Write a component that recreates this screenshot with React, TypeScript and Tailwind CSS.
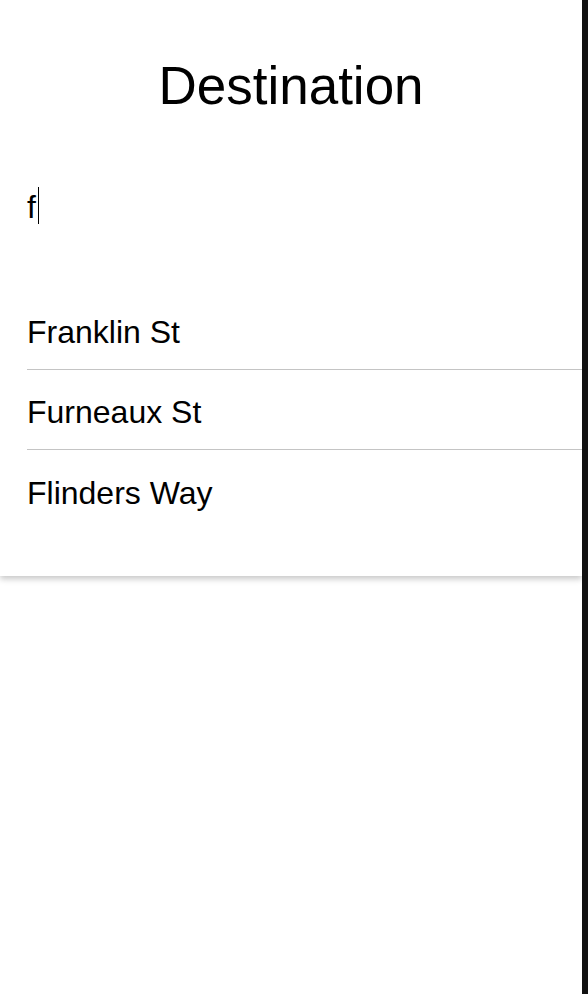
const SUGGESTIONS = ["Franklin St", "Furneaux St", "Flinders Way"];

export default function App() {
  return (
    <div className="flex h-[994px] w-full bg-white font-['Liberation_Sans',Arial,sans-serif] text-black">
      <main className="flex-1 min-w-0">
        {/* Search panel */}
        <section className="bg-white pb-[46px] shadow-[0_3px_6px_rgba(0,0,0,0.22)]">
          <h1 className="pt-[59px] text-center text-[53px] leading-none">Destination</h1>

          {/* Query */}
          <div className="mt-[77px] flex h-[37px] items-center pl-[27px] text-[32px] leading-[37px]">
            <span>f</span>
            <span className="ml-[2px] mt-[-4px] inline-block h-[37px] w-px bg-black" />
          </div>

          {/* Results */}
          <ul className="mt-[64px] ml-[27px]">
            {SUGGESTIONS.map((name, i) => (
              <li
                key={name}
                className={`flex h-[80px] items-center pt-[6px] text-[32px] leading-[37px] ${
                  i < SUGGESTIONS.length - 1 ? "border-b border-[#c4c4c4]" : ""
                }`}
              >
                {name}
              </li>
            ))}
          </ul>
        </section>
      </main>
      <aside className="w-[6px] shrink-0 bg-[#111111]" />
    </div>
  );
}
